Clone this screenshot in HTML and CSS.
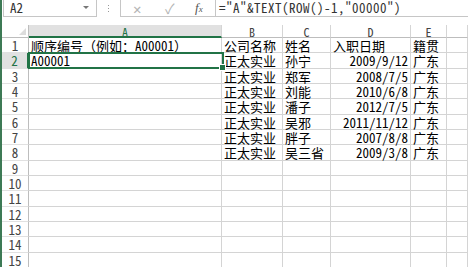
FILE: index.html
```html
<!DOCTYPE html>
<html lang="zh-CN">
<head>
    <meta charset="UTF-8">
    <title>Sheet1</title>
    <link rel="stylesheet" href="styles.css">
</head>
<body>
    <div class="formula-bar">
        <div class="name-box">A2<span class="drop"></span></div>
        <div class="grip"><i></i><i></i><i></i></div>
        <div class="fx-box">
            <span class="btn">&#x2715;</span>
            <span class="btn">&#x2713;</span>
            <span class="fx">f<sub>x</sub></span>
        </div>
        <div class="formula">="A"&amp;TEXT(ROW()-1,"00000")</div>
    </div>

    <div class="sheet">
        <div class="corner"><span class="tri"></span></div>
        <div class="col-h sel">A</div>
        <div class="col-h">B</div>
        <div class="col-h">C</div>
        <div class="col-h">D</div>
        <div class="col-h">E</div>
        <div class="col-h"></div>

        <div class="row-h">1</div>
        <div class="c">顺序编号（例如：A00001）</div>
        <div class="c">公司名称</div>
        <div class="c">姓名</div>
        <div class="c">入职日期</div>
        <div class="c">籍贯</div>
        <div class="c"></div>

        <div class="row-h sel">2</div>
        <div class="c">A00001</div>
        <div class="c">正太实业</div>
        <div class="c">孙宁</div>
        <div class="c num">2009/9/12</div>
        <div class="c">广东</div>
        <div class="c"></div>

        <div class="row-h">3</div>
        <div class="c"></div>
        <div class="c">正太实业</div>
        <div class="c">郑军</div>
        <div class="c num">2008/7/5</div>
        <div class="c">广东</div>
        <div class="c"></div>

        <div class="row-h">4</div>
        <div class="c"></div>
        <div class="c">正太实业</div>
        <div class="c">刘能</div>
        <div class="c num">2010/6/8</div>
        <div class="c">广东</div>
        <div class="c"></div>

        <div class="row-h">5</div>
        <div class="c"></div>
        <div class="c">正太实业</div>
        <div class="c">潘子</div>
        <div class="c num">2012/7/5</div>
        <div class="c">广东</div>
        <div class="c"></div>

        <div class="row-h">6</div>
        <div class="c"></div>
        <div class="c">正太实业</div>
        <div class="c">吴邪</div>
        <div class="c num">2011/11/12</div>
        <div class="c">广东</div>
        <div class="c"></div>

        <div class="row-h">7</div>
        <div class="c"></div>
        <div class="c">正太实业</div>
        <div class="c">胖子</div>
        <div class="c num">2007/8/8</div>
        <div class="c">广东</div>
        <div class="c"></div>

        <div class="row-h">8</div>
        <div class="c"></div>
        <div class="c">正太实业</div>
        <div class="c">吴三省</div>
        <div class="c num">2009/3/8</div>
        <div class="c">广东</div>
        <div class="c"></div>

        <div class="row-h">9</div>
        <div class="c"></div><div class="c"></div><div class="c"></div><div class="c"></div><div class="c"></div><div class="c"></div>
        <div class="row-h">10</div>
        <div class="c"></div><div class="c"></div><div class="c"></div><div class="c"></div><div class="c"></div><div class="c"></div>
        <div class="row-h">11</div>
        <div class="c"></div><div class="c"></div><div class="c"></div><div class="c"></div><div class="c"></div><div class="c"></div>
        <div class="row-h">12</div>
        <div class="c"></div><div class="c"></div><div class="c"></div><div class="c"></div><div class="c"></div><div class="c"></div>
        <div class="row-h">13</div>
        <div class="c"></div><div class="c"></div><div class="c"></div><div class="c"></div><div class="c"></div><div class="c"></div>
        <div class="row-h">14</div>
        <div class="c"></div><div class="c"></div><div class="c"></div><div class="c"></div><div class="c"></div><div class="c"></div>
        <div class="row-h">15</div>
        <div class="c"></div><div class="c"></div><div class="c"></div><div class="c"></div><div class="c"></div><div class="c"></div>

        <!-- active cell A2 -->
        <div class="cursor"><span class="handle"></span></div>
    </div>
</body>
</html>
```

FILE: styles.css
```css
body {
    margin: 0;
    height: 267px;
    overflow: hidden;
    background-color: #fff;
    border-left: 2px solid #3d7a55;
    font-family: "Noto Sans Mono CJK SC", "Noto Sans CJK SC", monospace;
    font-size: 13px;
    color: #000;
}
.formula-bar {
    display: flex;
    height: 17px;
    margin-bottom: 8px;
    color: #333;
}
.name-box {
    position: relative;
    width: 94px;
    margin-left: 1px;
    padding-left: 6px;
    box-sizing: border-box;
    border: 1px solid #c6c6c6;
    border-top: none;
    line-height: 16px;
}
.drop {
    position: absolute;
    left: 79px;
    top: 6px;
    border-left: 3px solid transparent;
    border-right: 3px solid transparent;
    border-top: 3px solid #777;
}
.grip {
    width: 23px;
    display: flex;
    flex-direction: column;
    align-items: center;
    justify-content: center;
    gap: 2px;
}
.grip i {
    width: 1px;
    height: 1px;
    background-color: #999;
}
.fx-box {
    width: 96px;
    box-sizing: border-box;
    border: 1px solid #c6c6c6;
    border-top: none;
    display: flex;
    align-items: center;
    padding-left: 12px;
}
.btn {
    width: 32px;
    color: #b4b4b4;
    font-size: 14px;
    line-height: 16px;
}
.fx {
    font-family: "Liberation Serif", serif;
    font-style: italic;
    font-size: 13px;
    line-height: 16px;
    color: #555;
    margin-left: -2px;
}
.fx sub {
    font-size: 9px;
    vertical-align: 0;
}
.formula {
    flex: 1;
    border-bottom: 1px solid #c6c6c6;
    padding-left: 3px;
    line-height: 16px;
    letter-spacing: 0.5px;
    white-space: nowrap;
}
.sheet {
    position: relative;
    display: grid;
    grid-template-columns: 27px 193px 61px 48px 80px 36px 1fr;
    grid-template-rows: 13px;
    grid-auto-rows: 15.333px;
}
.corner {
    position: relative;
    border-right: 1px solid #bdbdbd;
    border-bottom: 1px solid #bdbdbd;
    box-sizing: border-box;
}
.tri {
    position: absolute;
    right: 2px;
    bottom: 2px;
    border-left: 7px solid transparent;
    border-bottom: 7px solid #dcdcdc;
}
.col-h {
    box-sizing: border-box;
    border-right: 1px solid #d5d5d5;
    border-bottom: 1px solid #bdbdbd;
    text-align: center;
    font-size: 12px;
    line-height: 13px;
    color: #444;
}
.col-h.sel {
    background-color: #e1e1e1;
    color: #217346;
    border-bottom: 2px solid #217346;
}
.row-h {
    box-sizing: border-box;
    border-right: 1px solid #bdbdbd;
    border-bottom: 1px solid #e1e1e1;
    text-align: center;
    font-size: 13px;
    line-height: 15px;
    color: #444;
}
.row-h.sel {
    background-color: #e1e1e1;
    color: #217346;
    border-right: 2px solid #217346;
}
.c {
    box-sizing: border-box;
    border-right: 1px solid #d4d4d4;
    border-bottom: 1px solid #d4d4d4;
    padding-left: 2px;
    line-height: 15px;
    white-space: nowrap;
}
.c.num {
    text-align: right;
    padding-right: 2px;
}
.cursor {
    position: absolute;
    left: 26px;
    top: 27px;
    width: 196px;
    height: 17px;
    box-sizing: border-box;
    border: 2px solid #217346;
}
.handle {
    position: absolute;
    right: -4px;
    bottom: -4px;
    width: 5px;
    height: 5px;
    background-color: #217346;
    border: 1px solid #fff;
}
```
